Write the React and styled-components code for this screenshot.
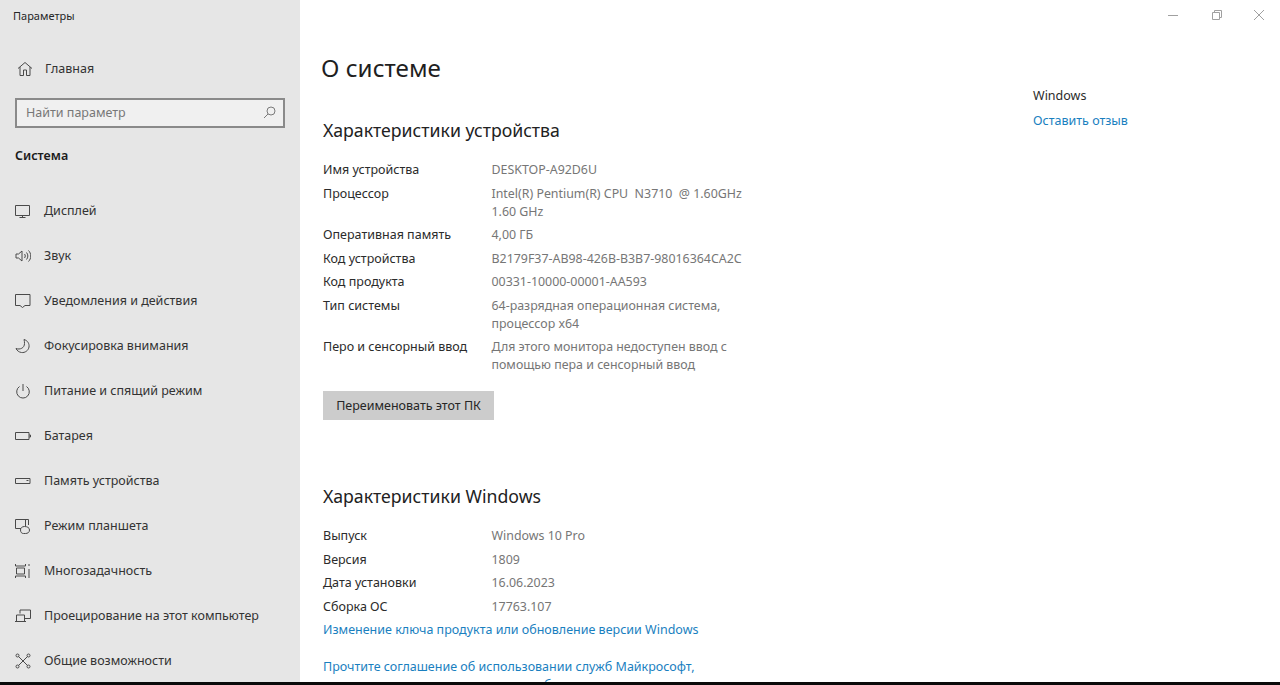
import React from "react";
import styled, { createGlobalStyle } from "styled-components";

const Global = createGlobalStyle`
  html, body {
    margin: 0;
    height: 100%;
    overflow: hidden;
    background: #000;
  }
  * { box-sizing: border-box; }
`;

const FONT = `"Noto Sans", "Open Sans", sans-serif`;

const Page = styled.div`
  width: 1280px;
  height: 685px;
  display: flex;
  flex-direction: column;
  overflow: hidden;
  font-family: ${FONT};
  font-size: 12.5px;
  color: #262626;
`;

const Body = styled.div`
  position: relative;
  height: 682px;
  display: flex;
  overflow: hidden;
  background: #fff;
`;

const BottomBar = styled.div`
  height: 3px;
  background: #0a0a0a;
`;

const Sidebar = styled.aside`
  width: 300px;
  flex-shrink: 0;
  background: #e6e6e6;
  padding: 8px 15px 0 15px;
`;

const AppTitle = styled.div`
  font-size: 11px;
  line-height: 16px;
  margin-left: -2px;
`;

const NavItem = styled.div`
  height: 45px;
  display: flex;
  align-items: center;
  gap: 13px;
  white-space: nowrap;
  color: #333;

  svg {
    width: 16px;
    height: 16px;
    flex-shrink: 0;
    fill: none;
    stroke: #4a4a4a;
    stroke-width: 1;
  }
`;

const HomeItem = styled(NavItem)`
  margin-top: 22px;
  padding-left: 2px;
  gap: 12px;
`;

const Search = styled.div`
  width: 270px;
  height: 30px;
  margin-top: 7px;
  border: 2px solid #8a8a8a;
  background: #f0f0f0;
  display: flex;
  align-items: center;
  justify-content: space-between;
  padding: 0 7px 2px 9px;
  color: #777;

  svg {
    width: 13px;
    height: 13px;
    fill: none;
    stroke: #7a7a7a;
    stroke-width: 1;
  }
`;

const SectionName = styled.div`
  margin-top: 18px;
  height: 20px;
  line-height: 20px;
  font-weight: 600;
  font-size: 12.5px;
  color: #1c1c1c;
`;

const NavList = styled.nav`
  margin-top: 22px;
`;

const Main = styled.main`
  flex: 1;
  display: flex;
  justify-content: space-between;
  padding-left: 23px;
  min-width: 0;
`;

const Content = styled.div`
  width: 440px;
`;

const PageTitle = styled.h1`
  margin: 48px 0 0 -2px;
  font-size: 24.2px;
  line-height: 40px;
  font-weight: 400;
  color: #1f1f1f;
`;

const SectionTitle = styled.h2`
  margin: ${(p) => p.$top}px 0 0;
  font-size: 17.7px;
  line-height: 26px;
  font-weight: 400;
  color: #222;
`;

const SpecList = styled.div`
  margin-top: 18px;
  display: flex;
  flex-direction: column;
  gap: 5.500px;
`;

const SpecRow = styled.div`
  display: flex;
  line-height: 18px;
`;

const SpecLabel = styled.div`
  width: 168.500px;
  flex-shrink: 0;
  color: #2b2b2b;
`;

const SpecValue = styled.div`
  width: 262px;
  color: #767676;
  font-size: 12.400px;
  white-space: pre;
`;

const Rename = styled.button`
  display: block;
  margin-top: 16.500px;
  width: 171px;
  height: 29px;
  border: 0;
  padding: 0;
  background: #cccccc;
  font: inherit;
  color: #262626;
`;

const TextLink = styled.a`
  display: block;
  color: #1a7fbf;
  line-height: 18px;
  white-space: nowrap;
  margin-top: ${(p) => p.$top || 0}px;
`;

const Aside = styled.div`
  width: 247px;
  padding-top: 87px;
`;

const AsideTitle = styled.div`
  line-height: 18px;
  color: #2b2b2b;
`;

const WindowControls = styled.div`
  position: absolute;
  top: 0;
  right: 0;
  display: flex;

  svg {
    display: block;
    width: 43px;
    height: 30px;
    fill: none;
    stroke: #a0a0a0;
    stroke-width: 1;
  }
`;

const Icon = ({ children }) => (
  <svg viewBox="0 0 16 16" aria-hidden="true">
    {children}
  </svg>
);

const navItems = [
  {
    label: "Дисплей",
    icon: (
      <Icon>
        <path d="M.5 2.500h14v10H.5zM4.500 14.500h6M7.500 12.500v2" />
      </Icon>
    ),
  },
  {
    label: "Звук",
    icon: (
      <Icon>
        <path d="M1 6h2.500L7 3v10L3.500 10H1zM9.500 6c1 1.200 1 2.800 0 4M11.500 4.500c1.800 2 1.800 5 0 7M13.500 2.500c3 3 3 8 0 11" />
      </Icon>
    ),
  },
  {
    label: "Уведомления и действия",
    icon: (
      <Icon>
        <path d="M.5 1.500h14.500v11h-5l-2.500 2-2.500-2h-4.500z" />
      </Icon>
    ),
  },
  {
    label: "Фокусировка внимания",
    icon: (
      <Icon>
        <path d="M9 1.500c3.500 1 5.500 4 5 7.500-.6 3.500-4 6-7.500 5.500-2.500-.3-4.500-1.800-5.500-4 4 1.500 8.500-.500 8.500-5 0-1.500-.1-2.800-.5-4z" />
      </Icon>
    ),
  },
  {
    label: "Питание и спящий режим",
    icon: (
      <Icon>
        <path d="M8 1v7M4.500 3.500a6.300 6.300 0 1 0 7 0" />
      </Icon>
    ),
  },
  {
    label: "Батарея",
    icon: (
      <Icon>
        <path d="M.5 4.500h13.500v7H.5zM14 7h1.500v2H14" />
      </Icon>
    ),
  },
  {
    label: "Память устройства",
    icon: (
      <Icon>
        <path d="M.5 5.500h14.500v5H.5zM11.500 7.500h2" />
      </Icon>
    ),
  },
  {
    label: "Режим планшета",
    icon: (
      <Icon>
        <path d="M6 10.500H.5v-9h13V7M8.500 15.500c-2 0-3-1.500-3-3.500s1.500-3.500 4-3.500 5 1 5 3.500-2 3.500-4 3.500zM10.500 2v6" />
      </Icon>
    ),
  },
  {
    label: "Многозадачность",
    icon: (
      <Icon>
        <path d="M.5 1v2h10V1M.5 15v-2h10v2M1.500 5h8v6h-8zM14 1v2M14 6v9" />
      </Icon>
    ),
  },
  {
    label: "Проецирование на этот компьютер",
    icon: (
      <Icon>
        <path d="M5 5.500V2h10.500v8.500H10M1.500 7h8v6.500h-8zM0 13.500h11" />
      </Icon>
    ),
  },
  {
    label: "Общие возможности",
    icon: (
      <Icon>
        <circle cx="2.500" cy="2.500" r="1.500" />
        <circle cx="13.500" cy="2.500" r="1.500" />
        <circle cx="2.500" cy="13.500" r="1.500" />
        <circle cx="13.500" cy="13.500" r="1.500" />
        <path d="M3.500 3.500l9 9M12.500 3.500l-9 9" />
      </Icon>
    ),
  },
];

const deviceSpecs = [
  ["Имя устройства", "DESKTOP-A92D6U"],
  ["Процессор", "Intel(R) Pentium(R) CPU  N3710  @ 1.60GHz\n1.60 GHz"],
  ["Оперативная память", "4,00 ГБ"],
  ["Код устройства", "B2179F37-AB98-426B-B3B7-98016364CA2C"],
  ["Код продукта", "00331-10000-00001-AA593"],
  ["Тип системы", "64-разрядная операционная система,\nпроцессор x64"],
  ["Перо и сенсорный ввод", "Для этого монитора недоступен ввод с\nпомощью пера и сенсорный ввод"],
];

const windowsSpecs = [
  ["Выпуск", "Windows 10 Pro"],
  ["Версия", "1809"],
  ["Дата установки", "16.06.2023"],
  ["Сборка ОС", "17763.107"],
];

const Specs = ({ rows }) => (
  <SpecList>
    {rows.map(([label, value]) => (
      <SpecRow key={label}>
        <SpecLabel>{label}</SpecLabel>
        <SpecValue>{value}</SpecValue>
      </SpecRow>
    ))}
  </SpecList>
);

export default function App() {
  return (
    <Page>
      <Global />
      <Body>
        <Sidebar>
          <AppTitle>Параметры</AppTitle>
          <HomeItem>
            <Icon>
              <path d="M1 7.500L8 1.500l7 6M3 6v8.500h3.500V9h3v5.500H13V6" />
            </Icon>
            Главная
          </HomeItem>
          <Search>
            Найти параметр
            <svg viewBox="0 0 13 13" aria-hidden="true">
              <circle cx="8" cy="5" r="4" />
              <path d="M5 8l-4 4" />
            </svg>
          </Search>
          <SectionName>Система</SectionName>
          <NavList>
            {navItems.map((item) => (
              <NavItem key={item.label}>
                {item.icon}
                {item.label}
              </NavItem>
            ))}
          </NavList>
        </Sidebar>
        <Main>
          <Content>
            <PageTitle>О системе</PageTitle>
            <SectionTitle $top={29}>Характеристики устройства</SectionTitle>
            <Specs rows={deviceSpecs} />
            <Rename>Переименовать этот ПК</Rename>
            <SectionTitle $top={63.5}>Характеристики Windows</SectionTitle>
            <Specs rows={windowsSpecs} />
            <TextLink $top={5}>Изменение ключа продукта или обновление версии Windows</TextLink>
            <TextLink $top={19}>Прочтите соглашение об использовании служб Майкрософт,</TextLink>
            <TextLink>которое применяется к нашим службам</TextLink>
          </Content>
          <Aside>
            <AsideTitle>Windows</AsideTitle>
            <TextLink $top={7}>Оставить отзыв</TextLink>
          </Aside>
        </Main>
        <WindowControls>
          <svg viewBox="0 0 43 30" aria-hidden="true">
            <path d="M17 15.500h10" />
          </svg>
          <svg viewBox="0 0 43 30" aria-hidden="true">
            <path d="M18.500 12.500h7v7h-7zM20.500 12.500v-2h7v7h-2" />
          </svg>
          <svg viewBox="0 0 43 30" aria-hidden="true">
            <path d="M17 10l10 10M27 10L17 20" />
          </svg>
        </WindowControls>
      </Body>
      <BottomBar />
    </Page>
  );
}
